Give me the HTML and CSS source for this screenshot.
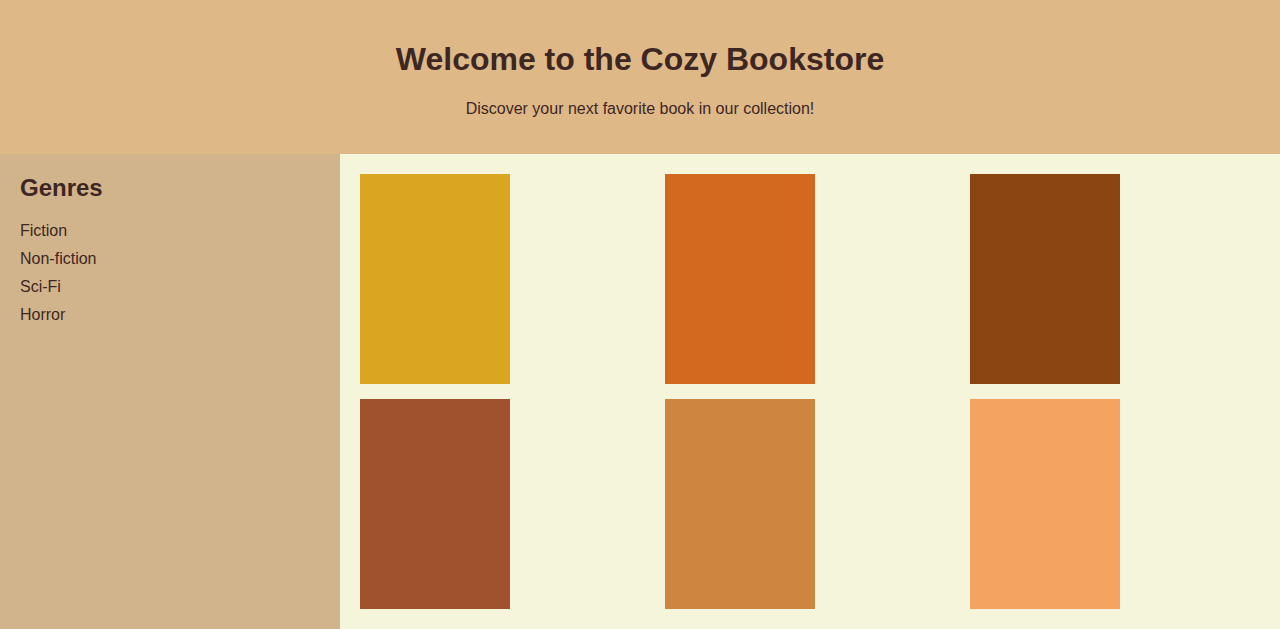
FILE: index.html
```html
<!DOCTYPE html>
<html lang="en">
<head>
<meta charset="utf-8">
<title>Cozy Bookstore</title>
<link rel="stylesheet" href="styles.css">
</head>
<body>
<header class="site-header">
  <h1 class="title">Welcome to the Cozy Bookstore</h1>
  <p class="subtitle">Discover your next favorite book in our collection!</p>
</header>
<div class="layout">
  <aside class="sidebar">
    <h2 class="sidebar-title">Genres</h2>
    <ul class="genre-list">
      <li>Fiction</li>
      <li>Non-fiction</li>
      <li>Sci-Fi</li>
      <li>Horror</li>
    </ul>
  </aside>
  <main class="books">
    <div class="book book-1"></div>
    <div class="book book-2"></div>
    <div class="book book-3"></div>
    <div class="book book-4"></div>
    <div class="book book-5"></div>
    <div class="book book-6"></div>
  </main>
</div>
</body>
</html>
```
FILE: styles.css
```css
* { box-sizing: border-box; }
html, body { margin: 0; padding: 0; }
body {
  font-family: "Liberation Sans", Arial, sans-serif;
  color: #3e2723;
  background: #f5f5dc;
}
.site-header {
  background: #deb887;
  padding: 20px;
  text-align: center;
}
.title {
  font-size: 32px;
  font-weight: bold;
  margin: 21.44px 0;
}
.subtitle {
  font-size: 16px;
  margin: 16px 0;
}
.layout {
  display: flex;
  min-height: 475px;
}
.sidebar {
  width: 340px;
  flex-shrink: 0;
  background: #d2b48c;
  padding: 20px;
}
.sidebar-title {
  font-size: 24px;
  margin: 0 0 19.92px;
}
.genre-list {
  list-style: none;
  margin: 0;
  padding: 0;
  font-size: 16px;
}
.genre-list li {
  margin-bottom: 10px;
}
.books {
  flex: 1;
  padding: 20px;
  display: grid;
  grid-template-columns: repeat(3, 1fr);
  gap: 15px;
  align-content: start;
}
.book { width: 150px; height: 210px; }
.book-1 { background: #daa520; }
.book-2 { background: #d2691e; }
.book-3 { background: #8b4513; }
.book-4 { background: #a0522d; }
.book-5 { background: #cd853f; }
.book-6 { background: #f4a460; }
```
